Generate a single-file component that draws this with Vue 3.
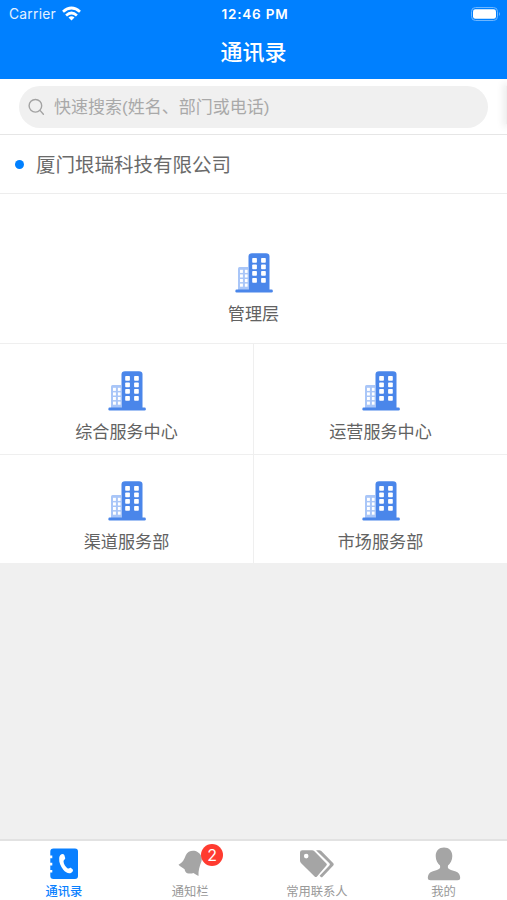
<template>
  <div class="page">
    <header class="header">
      <div class="status">
        <div class="carrier">
          <span>Carrier</span>
          <svg width="19" height="15" viewBox="0 0 19 15" fill="none" stroke="#fff" stroke-width="2.7">
            <path d="M1 5.8 Q9.5 -1.8 18 5.8" />
            <path d="M4.1 9.4 Q9.5 4.6 14.9 9.4" />
            <path d="M9.5 14.4 L6.5 11.4 Q9.5 9 12.5 11.4 Z" fill="#fff" stroke="none" />
          </svg>
        </div>
        <span class="time">12:46 PM</span>
        <svg class="battery" width="30" height="14" viewBox="0 0 30 14">
          <rect x="0.5" y="0.5" width="26" height="13" rx="4" fill="none" stroke="#6db6ff" />
          <rect x="2" y="2.2" width="23" height="9.6" rx="2.4" fill="#fff" />
          <path d="M28 5 Q30 7 28 9 Z" fill="#6db6ff" />
        </svg>
      </div>
      <h1 class="title">通讯录</h1>
    </header>

    <div class="search-bar">
      <div class="search">
        <svg width="18" height="18" viewBox="0 0 18 18" fill="none" stroke="#a3a3a3" stroke-width="1.4">
          <circle cx="7.4" cy="7.8" r="6.3" />
          <path d="M12 12.4 L15.4 16.2" stroke-linecap="round" />
        </svg>
        <span class="placeholder">快速搜索(姓名、部门或电话)</span>
      </div>
      <div class="side-shadow"></div>
    </div>

    <div class="company">
      <i class="dot"></i>
      <span class="company-name">厦门垠瑞科技有限公司</span>
    </div>

    <div class="grid">
      <div v-for="(dept, i) in departments" :key="dept" class="cell" :class="{ top: i === 0, right: i > 0 && i % 2 === 0, last: i > 2 }">
        <svg width="38" height="40" viewBox="0 0 38 40">
          <path d="M3 37 V15.5 Q3 14 4.5 14 H13 V37 Z" fill="#a9c6f8" />
          <path d="M13.5 37 V3.5 Q13.5 0.3 17 0.3 H31 Q34.5 0.3 34.5 3.5 V37 Z" fill="#4a86ea" />
          <rect x="0.4" y="36.6" width="37.4" height="2.8" rx="1.2" fill="#4a86ea" />
          <g fill="#fff">
            <template v-for="y in [5, 11.5, 18, 25]" :key="y">
              <rect x="17.2" :y="y" width="4.7" height="4.8" rx="0.8" />
              <rect x="26.1" :y="y" width="4.7" height="4.8" rx="0.8" />
            </template>
            <template v-for="y in [16.8, 21.4, 26, 30.6]" :key="y">
              <rect x="5" :y="y" width="2.9" height="3.1" />
              <rect x="9.9" :y="y" width="2.7" height="3.1" />
            </template>
          </g>
        </svg>
        <span class="name">{{ dept }}</span>
      </div>
    </div>

    <nav class="tabbar">
      <div v-for="tab in tabs" :key="tab.name" class="tab" :class="{ active: tab.name === current }">
        <div class="tab-icon">
          <svg v-if="tab.icon === 'book'" width="36" height="34" viewBox="0 0 36 34">
            <path d="M8.5 0.6 H30 Q33 0.6 33 3.6 V28 Q33 31 30 31 H8.5 Q5.3 31 5.3 28 V24.6 H7.3 V22 H5.3 V17.4 H7.3 V14.8 H5.3 V10.2 H7.3 V7.6 H5.3 V3.6 Q5.3 0.6 8.5 0.6 Z" fill="#0a80ff" />
            <path d="M15.4 7 C16.8 5.6 18.5 5.7 19.3 7 L20.2 10 C20.4 11.4 18.8 11.9 18.5 13 C18.5 16 20.4 19 22.7 20.4 C23.9 20.8 24.5 19.5 25.7 19.7 L27.6 21.2 C28.6 22.4 27.6 24 26.3 24.8 C23.7 26.2 20.7 24.6 18.3 21.7 C15.6 18.4 13.9 14.4 14.2 10.5 C14.3 8.8 14.6 7.8 15.4 7 Z" fill="#fff" />
          </svg>
          <svg v-else-if="tab.icon === 'bell'" width="36" height="34" viewBox="0 0 36 34">
            <path d="M6.5 16.8 C10.5 14.8 12.2 11.5 13.8 7.2 C15.5 3.4 19.5 2.2 23.5 3 C28 4.6 31 8.8 29.4 13.6 C27.6 18.5 26.2 22.5 26.5 27.9 C24.6 27.2 23 26 21.4 25 C19.7 25.8 17 25.7 15.2 25.2 C13.4 24.2 13 23 12.6 21.2 C10.2 19.6 8.2 18.7 6.5 16.8 Z" fill="#a5a5a5" />
          </svg>
          <svg v-else-if="tab.icon === 'tags'" width="36" height="34" viewBox="0 0 36 34">
            <path d="M17 2.2 H20.2 Q21.4 2.2 22.3 3.1 L34.3 15.3 Q35.3 16.4 34.3 17.5 L23.6 28.7 Q22.6 29.7 21.6 28.7 L20.6 27.8 L30.4 17.5 Q31.4 16.4 30.4 15.3 Z" fill="#a5a5a5" />
            <path fill-rule="evenodd" d="M3.3 2.2 H13 Q14.4 2.2 15.4 3.2 L27.4 15.4 Q28.4 16.5 27.4 17.6 L18 28.5 Q16.8 29.6 15.6 28.5 L2.2 15.3 Q1 14.2 1 12.6 V4.5 Q1 2.2 3.3 2.2 Z M7.2 5.8 A2.3 2.3 0 1 0 7.2 10.4 A2.3 2.3 0 1 0 7.2 5.8 Z" fill="#a5a5a5" />
          </svg>
          <svg v-else width="36" height="34" viewBox="0 0 36 34">
            <path d="M18 -0.4 C23 -0.4 26.3 3 26.3 8 C26.3 12.2 24.5 15.6 22 17.4 C21.2 19.9 22.8 21.2 25 21.9 L29.8 23.5 C33 24.8 34 26.8 34.2 29.7 Q34.2 32.2 31.5 32.2 H4.6 Q1.8 32.2 1.8 29.7 C2 26.8 3 24.8 6.2 23.5 L11 21.9 C13.2 21.2 14.8 19.9 14 17.4 C11.5 15.6 9.7 12.2 9.7 8 C9.7 3 13 -0.4 18 -0.4 Z" fill="#a5a5a5" />
          </svg>
          <span v-if="tab.badge" class="badge">{{ tab.badge }}</span>
        </div>
        <span class="tab-name">{{ tab.name }}</span>
      </div>
    </nav>
  </div>
</template>

<script setup>
import { ref } from 'vue'

const departments = ['管理层', '综合服务中心', '运营服务中心', '渠道服务部', '市场服务部']

const tabs = [
  { name: '通讯录', icon: 'book' },
  { name: '通知栏', icon: 'bell', badge: 2 },
  { name: '常用联系人', icon: 'tags' },
  { name: '我的', icon: 'user' },
]
const current = ref('通讯录')
</script>

<style>
body {
  margin: 0;
}
</style>

<style scoped>
.page {
  display: flex;
  flex-direction: column;
  height: 900px;
  overflow: hidden;
  background: #f0f0f0;
  font-family: "Liberation Sans", "Noto Sans CJK SC", sans-serif;
}

.page * {
  box-sizing: border-box;
}

svg {
  display: block;
  flex: none;
  overflow: visible;
}

/* Header */
.header {
  height: 79px;
  flex: none;
  background: #0080ff;
  color: #fff;
}

.status {
  display: grid;
  grid-template-columns: 1fr auto 1fr;
  align-items: center;
  height: 27px;
  padding: 0 6px 0 9px;
  font-family: Inter, sans-serif;
  font-size: 13.8px;
}

.carrier {
  display: flex;
  align-items: center;
  gap: 6px;
  color: #e4f1ff;
  letter-spacing: 0.25px;
}

.time {
  font-size: 13.5px;
  font-weight: 600;
  letter-spacing: 0.8px;
}

.battery {
  justify-self: end;
}

.title {
  margin: 0;
  height: 47px;
  line-height: 47px;
  text-align: center;
  font-size: 22px;
  font-weight: 500;
  font-family: "Noto Sans CJK SC", sans-serif;
}

/* Search */
.search-bar {
  display: flex;
  justify-content: space-between;
  flex: none;
  height: 56px;
  padding: 7px 0 0 19px;
  background: #fff;
  border-bottom: 1px solid #e6e6e6;
  overflow: hidden;
}

.search {
  display: flex;
  align-items: center;
  gap: 8px;
  width: 469px;
  height: 42px;
  padding-left: 9px;
  border-radius: 21px;
  background: #f0f0f0;
  color: #a9a9a9;
  font-size: 17px;
}

.placeholder {
  padding-bottom: 3px;
}

.side-shadow {
  width: 1px;
  height: 38px;
  background: #eee;
  box-shadow: 0 0 7px 3px #ececec;
}

/* Company */
.company {
  display: flex;
  align-items: center;
  flex: none;
  height: 59px;
  padding-left: 15px;
  background: #fff;
  border-bottom: 1px solid #ededed;
  color: #6a6a6a;
  font-size: 19.5px;
}

.company-name {
  padding-bottom: 2px;
}

.dot {
  width: 9px;
  height: 9px;
  margin-right: 12px;
  border-radius: 50%;
  background: #0080ff;
}

/* Departments */
.grid {
  display: grid;
  grid-template-columns: 254px 253px;
  grid-template-rows: 150px 111px 108px;
  flex: none;
  background: #fff;
}

.cell {
  display: flex;
  flex-direction: column;
  align-items: center;
  padding-top: 27px;
  border-right: 1px solid #efefef;
  border-bottom: 1px solid #efefef;
}

.cell.top {
  grid-column: 1 / 3;
  padding-top: 59px;
  border-right: 0;
}

.cell.right {
  border-right: 0;
}

.cell.last {
  padding-top: 26px;
  border-bottom: 0;
}

.name {
  margin-top: 10px;
  height: 24px;
  line-height: 24px;
  font-size: 17.1px;
  color: #626262;
}

/* Tab bar */
.tabbar {
  display: flex;
  height: 61px;
  margin-top: auto;
  background: #fff;
  border-top: 2px solid #e2e2e2;
}

.tab {
  display: flex;
  flex-direction: column;
  align-items: center;
  flex: 1;
  padding-top: 7px;
  color: #999;
}

.tab-icon {
  position: relative;
}

.badge {
  position: absolute;
  top: -4px;
  left: 29px;
  width: 22px;
  height: 22px;
  border-radius: 50%;
  background: #ff3b30;
  color: #fff;
  font-family: Inter, sans-serif;
  font-size: 16px;
  line-height: 22px;
  text-align: center;
}

.tab-name {
  height: 18px;
  line-height: 18px;
  font-size: 12.3px;
  margin-top: 1px;
}

.tab.active {
  color: #0a80ff;
}

.tab.active .tab-name {
  margin-top: 0;
  padding-left: 1px;
  font-weight: 500;
  font-family: "Noto Sans CJK SC", sans-serif;
}
</style>
